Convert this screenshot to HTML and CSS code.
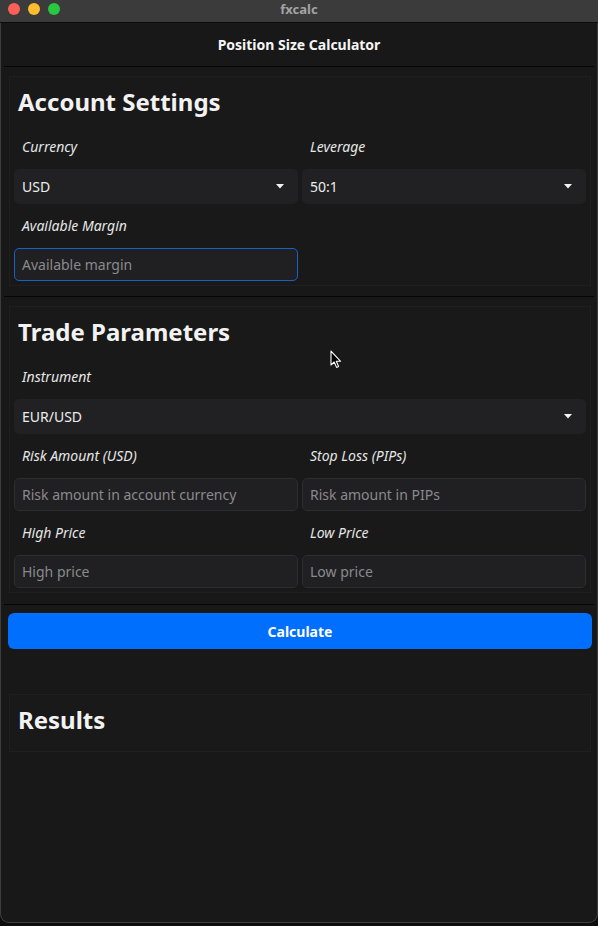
FILE: index.html
```html
<!DOCTYPE html>
<html lang="en">
<head>
<meta charset="utf-8">
<title>fxcalc</title>
<link rel="stylesheet" href="styles.css">
</head>
<body>
<div class="window">
  <div class="titlebar">
    <div class="lights">
      <span class="light red"></span>
      <span class="light yellow"></span>
      <span class="light green"></span>
    </div>
    <div class="wintitle">fxcalc</div>
  </div>

  <header class="app-header">Position Size Calculator</header>
  <div class="divider"></div>

  <section class="card">
    <h2 class="card-title">Account Settings</h2>
    <div class="grid two">
      <div class="field">
        <label class="label">Currency</label>
        <div class="select"><span>USD</span><svg class="caret" width="8" height="5" viewBox="0 0 8 5"><path d="M0 0H8L4 4.5Z" fill="#f2f2f2"/></svg></div>
      </div>
      <div class="field">
        <label class="label">Leverage</label>
        <div class="select"><span>50:1</span><svg class="caret" width="8" height="5" viewBox="0 0 8 5"><path d="M0 0H8L4 4.5Z" fill="#f2f2f2"/></svg></div>
      </div>
      <div class="field">
        <label class="label">Available Margin</label>
        <input class="input focused" type="text" placeholder="Available margin">
      </div>
    </div>
  </section>
  <div class="divider gap"></div>

  <section class="card">
    <h2 class="card-title">Trade Parameters</h2>
    <div class="grid">
      <div class="field">
        <label class="label">Instrument</label>
        <div class="select"><span>EUR/USD</span><svg class="caret" width="8" height="5" viewBox="0 0 8 5"><path d="M0 0H8L4 4.5Z" fill="#f2f2f2"/></svg></div>
      </div>
    </div>
    <div class="grid two">
      <div class="field">
        <label class="label">Risk Amount (USD)</label>
        <input class="input" type="text" placeholder="Risk amount in account currency">
      </div>
      <div class="field">
        <label class="label">Stop Loss (PIPs)</label>
        <input class="input" type="text" placeholder="Risk amount in PIPs">
      </div>
      <div class="field">
        <label class="label">High Price</label>
        <input class="input" type="text" placeholder="High price">
      </div>
      <div class="field">
        <label class="label">Low Price</label>
        <input class="input" type="text" placeholder="Low price">
      </div>
    </div>
  </section>
  <div class="divider gap2"></div>

  <button class="btn" type="button">Calculate</button>

  <section class="card results">
    <h2 class="card-title">Results</h2>
  </section>

  <svg class="cursor" width="12" height="19" viewBox="0 0 12 19">
    <path d="M1 1V15L4.2 12L6.6 17.4L8.6 16.5L6.3 11.3H10.6Z" fill="#000" stroke="#fff" stroke-width="1.1" stroke-linejoin="round"/>
  </svg>
</div>
</body>
</html>
```

FILE: styles.css
```css
* { box-sizing: border-box; }

html, body {
  margin: 0;
  padding: 0;
  background: #0d0d0d;
}

body {
  font-family: "Noto Sans", "Open Sans", sans-serif;
  color: #ececec;
}

.window {
  position: relative;
  width: 598px;
  height: 923px;
  background: #181818;
  border-radius: 0 0 9px 9px;
  box-shadow: inset 0 0 0 1px #3d3d3d;
  overflow: hidden;
  display: flex;
  flex-direction: column;
}

.titlebar {
  position: relative;
  height: 23px;
  background: #3b3b3b;
  border-bottom: 1px solid #0b0b0b;
  display: flex;
  align-items: flex-start;
  justify-content: center;
}

.lights {
  position: absolute;
  left: 8px;
  top: 3px;
  display: flex;
  gap: 8px;
}

.light {
  width: 12px;
  height: 12px;
  border-radius: 50%;
  display: block;
}
.red { background: #fe5f57; }
.yellow { background: #febc2e; }
.green { background: #28c840; }

.wintitle {
  font-size: 13px;
  font-weight: 700;
  line-height: 18px;
  color: #a3a3a3;
}

.app-header {
  text-align: center;
  font-size: 14px;
  font-weight: 700;
  line-height: 19px;
  padding: 12px 0 12px;
  color: #f5f5f5;
}

.divider {
  height: 1px;
  background: #050505;
  margin: 0 4px 9px;
}
.divider.gap { margin-top: 10px; }
.divider.gap2 { margin-top: 11px; margin-bottom: 8px; }

.card {
  margin: 0 7px 0 9px;
  border: 1px solid #1f1f1f;
  background: #191919;
  padding: 0 4px 4px;
}

.card-title {
  margin: 0;
  font-size: 24px;
  font-weight: 700;
  line-height: 33px;
  padding: 8px 4px 7px;
  color: #f2f2f2;
}

.grid {
  display: grid;
  grid-template-columns: 1fr;
  column-gap: 4px;
}
.grid.two { grid-template-columns: 1fr 1fr; }

.field {
  display: flex;
  flex-direction: column;
}

.label {
  font-style: italic;
  font-size: 14px;
  line-height: 20px;
  padding: 12px 8px 12px;
  color: #e6e6e6;
}

.select {
  height: 35px;
  background: #212123;
  border-radius: 5px;
  display: flex;
  align-items: center;
  justify-content: space-between;
  padding: 0 14px 0 8px;
  font-size: 14px;
  color: #ededed;
}

.caret { display: block; }

.input {
  height: 33px;
  width: 100%;
  background: #202022;
  border: 1px solid #2d2d2f;
  border-radius: 5px;
  padding: 0 7px;
  font-family: "Noto Sans", "Open Sans", sans-serif;
  font-size: 14px;
  color: #ededed;
  outline: none;
}
.input::placeholder { color: #8a8a8c; }
.input.focused { border-color: #1662cc; }

.btn {
  margin: 0 6px 0 8px;
  height: 36px;
  border: none;
  border-radius: 6px;
  background: #006ffd;
  color: #ffffff;
  font-family: "Noto Sans", "Open Sans", sans-serif;
  font-size: 14px;
  font-weight: 700;
}

.results {
  margin-top: 45px;
  padding-bottom: 8px;
}

.cursor {
  position: absolute;
  left: 330px;
  top: 350px;
}
```
